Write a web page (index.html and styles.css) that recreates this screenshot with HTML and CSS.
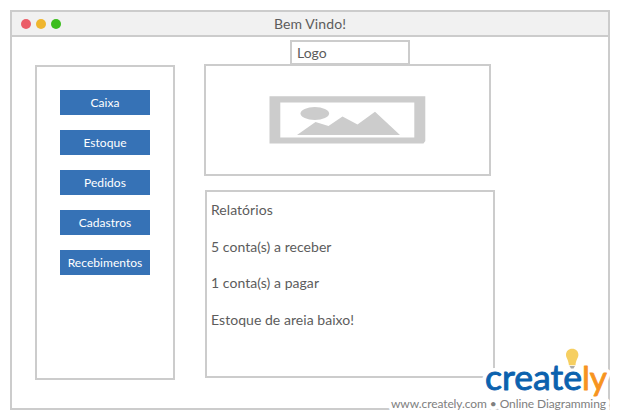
FILE: index.html
```html
<!DOCTYPE html>
<html lang="pt">
<head>
<meta charset="utf-8">
<title>Bem Vindo!</title>
<link rel="stylesheet" href="styles.css">
</head>
<body>
<div class="window">
  <header class="titlebar">
    <div class="dots"><span class="dot red"></span><span class="dot yellow"></span><span class="dot green"></span></div>
    <h1 class="title">Bem Vindo!</h1>
  </header>
  <div class="content">
    <nav class="sidebar">
      <button class="btn">Caixa</button>
      <button class="btn">Estoque</button>
      <button class="btn">Pedidos</button>
      <button class="btn">Cadastros</button>
      <button class="btn">Recebimentos</button>
    </nav>
    <main class="main">
      <div class="logo">Logo</div>
      <div class="picture">
        <svg class="placeholder" width="157" height="48" viewBox="0 0 157 48">
          <path fill="#ccc" fill-rule="evenodd" d="M0.500 0.300H156.300V45L154.500 47.500H0.500ZM11.300 6.500V41.500H145.300V6.500Z"/>
          <ellipse cx="45.800" cy="17.500" rx="14.300" ry="6.500" fill="#ccc"/>
          <path fill="#ccc" d="M28 39L46.500 26L59.500 30L73.500 20.500L88.500 28.500L106 15.700L131 39Z"/>
        </svg>
      </div>
      <section class="report">
        <p>Relatórios</p>
        <p>5 conta(s) a receber</p>
        <p>1 conta(s) a pagar</p>
        <p>Estoque de areia baixo!</p>
      </section>
    </main>
  </div>
</div>
<div class="watermark">
  <svg width="240" height="75" viewBox="380 345 240 75">
    <g class="halo">
      <text class="brand" x="485" y="390" textLength="97" lengthAdjust="spacingAndGlyphs">create</text>
      <text class="brand suffix" x="582" y="390" textLength="25" lengthAdjust="spacingAndGlyphs">ly</text>
      <text class="tagline" x="391" y="408" textLength="215">www.creately.com • Online Diagramming</text>
    </g>
    <text class="brand blue" x="485" y="390" textLength="97" lengthAdjust="spacingAndGlyphs">create</text>
    <text class="brand suffix orange" x="582" y="390" textLength="25" lengthAdjust="spacingAndGlyphs">ly</text>
    <path fill="#f6cf61" d="M572.200 348.700C568.500 348.700 566 351.300 566 354.700C566 358 568.500 359.500 568.900 365.300H575.500C575.900 359.500 578.400 358 578.400 354.700C578.400 351.300 575.900 348.700 572.200 348.700Z"/>
    <path fill="#aaa" d="M569.500 366H575L573.500 368.500H571Z"/>
    <text class="tagline" x="391" y="408" textLength="215">www.creately.com • Online Diagramming</text>
  </svg>
</div>
</body>
</html>
```
FILE: styles.css
```css
* { box-sizing: border-box; }
body {
  margin: 0;
  padding: 10px;
  width: 620px;
  height: 420px;
  overflow: hidden;
  background: #fff;
  color: #5c5c5c;
  font-family: Lato, sans-serif;
  font-size: 14px;
}
.window { height: 400px; border: 2px solid #ccc; }
.titlebar {
  display: grid;
  grid-template-columns: 1fr auto 1fr;
  align-items: center;
  height: 25px;
  background: #f1f1f1;
  border-bottom: 2px solid #ccc;
}
.title { margin: 0; font-size: 14px; font-weight: 400; line-height: 23px; letter-spacing: 0.1px; }
.dots { display: flex; gap: 5px; padding-left: 9px; }
.dot { width: 10px; height: 10px; border-radius: 50%; }
.red { background: #eb5d68; }
.yellow { background: #efb62f; }
.green { background: #3bbd1c; }
.content { display: flex; align-items: flex-start; padding: 3px 0 0 23px; }
.sidebar {
  display: flex;
  flex-direction: column;
  gap: 15px;
  width: 140px;
  height: 315px;
  margin-top: 25px;
  padding: 23px;
  border: 2px solid #ccc;
}
.btn {
  width: 90px;
  height: 25px;
  padding: 0;
  border: 0;
  background: #3672b6;
  color: #fff;
  font: 12px/25px Lato, sans-serif;
  letter-spacing: 0.05px;
  text-align: center;
}
.main { display: flex; flex-direction: column; margin-left: 29px; }
.logo {
  width: 120px;
  height: 25px;
  margin-left: 86px;
  padding-left: 5px;
  border: 2px solid #ccc;
  line-height: 21px;
}
.picture {
  width: 287px;
  height: 112px;
  margin-top: -1px;
  padding: 30px 0 0 63px;
  border: 2px solid #ccc;
}
.placeholder { display: block; }
.report {
  width: 290px;
  height: 188px;
  margin: 14px 0 0 1px;
  padding: 0 4px;
  border: 2px solid #ccc;
  letter-spacing: 0.05px;
}
.report p { margin: 0; line-height: 36.6px; }
.watermark { position: absolute; left: 380px; top: 345px; }
.watermark svg { display: block; }
.brand { font: 400 34px Lato, sans-serif; stroke-width: 0.9px; stroke-linejoin: round; }
.suffix { font-size: 32px; }
.blue { fill: #0b62ae; stroke: #0b62ae; }
.orange { fill: #f7941e; stroke: #f7941e; }
.tagline { font: 12px Lato, sans-serif; fill: #808080; }
.halo text { fill: #fff; stroke: #fff; stroke-width: 8px; stroke-linejoin: round; }
```
